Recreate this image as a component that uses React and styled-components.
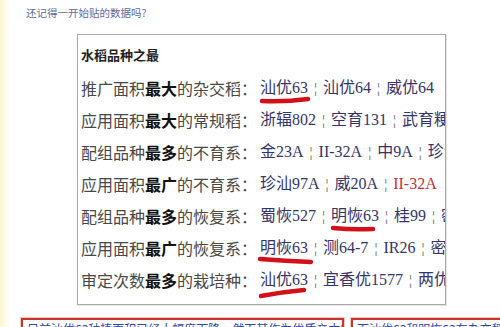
import React from "react";
import styled, { createGlobalStyle } from "styled-components";

const Global = createGlobalStyle`
  html, body { margin: 0; padding: 0; background: #fff; }
  body { width: 500px; height: 327px; overflow: hidden; }
`;

const Page = styled.div`
  width: 500px;
  height: 327px;
  overflow: hidden;
  background: linear-gradient(to right, #f9f6cf 0px, #fcfbe6 5px, #ffffff 10px);
  display: flex;
  flex-direction: column;
  font-family: "Liberation Serif", "Noto Sans CJK SC", serif;
`;

const Intro = styled.div`
  margin: 6px 0 0 26px;
  font-family: "Noto Sans CJK SC", sans-serif;
  font-size: 10.5px;
  line-height: 14px;
  color: #5d6b9c;
`;

const Card = styled.div`
  margin: 14px 0 0 77px;
  width: 364px;
  height: 269px;
  flex: none;
  border: 1px solid #a9a9a9;
  box-shadow: 1px 1px 0 #e4e4e4;
  background: #fff;
  overflow: hidden;
  padding-left: 3px;
  box-sizing: content-box;
`;

const Title = styled.div`
  margin-top: 12px;
  font-family: "Noto Sans CJK SC", sans-serif;
  font-weight: 700;
  font-size: 13px;
  line-height: 16px;
  color: #222;
`;

const Rows = styled.div`
  margin-top: 9px;
  display: flex;
  flex-direction: column;
`;

const Row = styled.div`
  display: flex;
  align-items: center;
  height: 32px;
  white-space: nowrap;
  font-size: 16px;
  line-height: 20px;
`;

const Label = styled.span`
  font-family: "Noto Sans CJK SC", sans-serif;
  color: #484848;
  width: 177px;
  flex: none;
`;

const Strong = styled.b`
  color: #111;
  font-weight: 700;
`;

const Values = styled.span`
  display: flex;
  align-items: center;
  margin-left: 2px;
`;

const Value = styled.span`
  position: relative;
  color: ${(p) => (p.$red ? "#c8303a" : "#34346a")};
`;

const Sep = styled.span`
  color: #555;
  margin: 0 6px;
  font-size: 15px;
`;

const Mark = styled.svg`
  position: absolute;
  left: 0;
  top: 20px;
  overflow: visible;
  pointer-events: none;
`;

const Bottom = styled.div`
  display: flex;
  gap: 7px;
  margin: 13px 0 0 21px;
`;

const Note = styled.div`
  flex: none;
  width: ${(p) => p.$w}px;
  height: 30px;
  border: 2px solid #c8362c;
  box-shadow: 0 0 0 1px #f2c7c2;
  box-sizing: border-box;
  padding: 2px 4px;
  font-family: "Noto Sans CJK SC", sans-serif;
  font-size: 12px;
  line-height: 14px;
  color: #2a48a8;
  white-space: nowrap;
  overflow: hidden;
  background: #fffdfd;
`;

const Underline = ({ w, d }) => (
  <Mark width={w} height="8" viewBox={`0 0 ${w} 8`}>
    <path d={d} stroke="#d3101a" strokeWidth="4.5" strokeLinecap="round" fill="none" />
  </Mark>
);

const data = [
  {
    label: ["推广面积", "最大", "的杂交稻："],
    values: [{ t: "汕优63", u: { w: 50, d: "M2 3 Q 25 4 48 1" } }, { t: "汕优64" }, { t: "威优64" }],
  },
  {
    label: ["应用面积", "最大", "的常规稻："],
    values: [{ t: "浙辐802" }, { t: "空育131" }, { t: "武育粳3号" }],
  },
  {
    label: ["配组品种", "最多", "的不育系："],
    values: [{ t: "金23A" }, { t: "II-32A" }, { t: "中9A" }, { t: "珍汕97A" }],
  },
  {
    label: ["应用面积", "最广", "的不育系："],
    values: [{ t: "珍汕97A" }, { t: "威20A" }, { t: "II-32A", red: true }],
  },
  {
    label: ["配组品种", "最多", "的恢复系："],
    values: [{ t: "蜀恢527" }, { t: "明恢63", u: { w: 44, d: "M2 2 Q 22 4 42 3" } }, { t: "桂99" }, { t: "密阳46" }],
  },
  {
    label: ["应用面积", "最广", "的恢复系："],
    values: [{ t: "明恢63", u: { w: 52, d: "M0 1 Q 26 3 51 4" } }, { t: "测64-7" }, { t: "IR26" }, { t: "密阳46" }],
  },
  {
    label: ["审定次数", "最多", "的栽培种："],
    values: [{ t: "汕优63", u: { w: 46, d: "M1 6 Q 22 2 44 0" } }, { t: "宜香优1577" }, { t: "两优培九" }],
  },
];

export default function App() {
  return (
    <>
      <Global />
      <Page>
        <Intro>还记得一开始贴的数据吗?</Intro>
        <Card>
          <Title>水稻品种之最</Title>
          <Rows>
            {data.map((r, i) => (
              <Row key={i}>
                <Label>
                  {r.label[0]}
                  <Strong>{r.label[1]}</Strong>
                  {r.label[2]}
                </Label>
                <Values>
                  {r.values.map((v, j) => (
                    <React.Fragment key={j}>
                      {j > 0 && <Sep>¦</Sep>}
                      <Value $red={v.red}>
                        {v.t}
                        {v.u && <Underline w={v.u.w} d={v.u.d} />}
                      </Value>
                    </React.Fragment>
                  ))}
                </Values>
              </Row>
            ))}
          </Rows>
        </Card>
        <Bottom>
          <Note $w={323}>目前汕优63种植面积已经大幅度下降，然而其作为优质亲本的作用仍然巨大</Note>
          <Note $w={160}>而汕优63和明恢63在杂交稻育种中的地位无可替代</Note>
        </Bottom>
      </Page>
    </>
  );
}
